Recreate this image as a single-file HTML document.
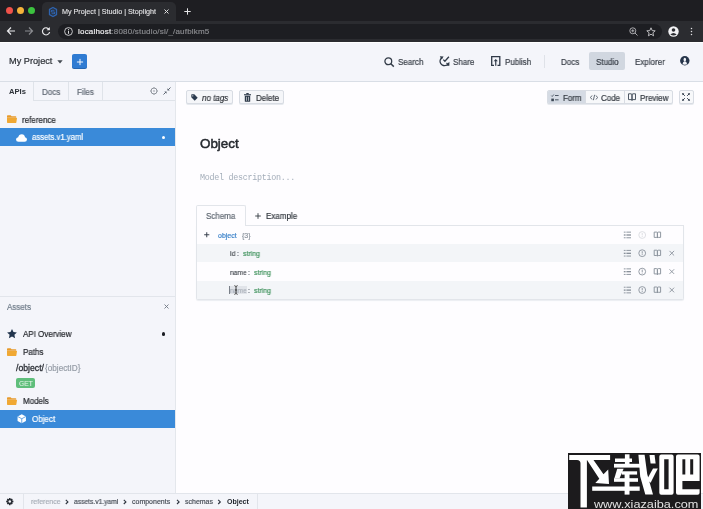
<!DOCTYPE html>
<html><head><meta charset="utf-8">
<style>
*{box-sizing:border-box;margin:0;padding:0}
html,body{width:703px;height:509px;overflow:hidden;font-family:"Liberation Sans",sans-serif;background:#f4f5f9;position:relative}
.a{position:absolute}
.t{position:absolute;white-space:nowrap;line-height:1;will-change:transform;-webkit-text-stroke:0.18px currentColor}
.b{font-weight:700;-webkit-text-stroke:0}
svg{position:absolute;overflow:visible}
</style></head><body>
<!-- browser chrome -->
<div class="a" style="left:0;top:0;width:703px;height:22px;background:#1e1e22"></div>
<div class="a" style="left:42px;top:2px;width:134px;height:21px;background:#2b2c30;border-radius:5px 5px 0 0"></div>
<div class="a" style="left:0;top:21px;width:703px;height:21px;background:#2b2c30"></div>
<div class="a" style="left:58px;top:23.5px;width:604px;height:15.5px;background:#1d1e22;border-radius:8px"></div>
<!-- traffic lights -->
<div class="a" style="left:5.5px;top:6.5px;width:7px;height:7px;border-radius:50%;background:#f0524a"></div>
<div class="a" style="left:16.5px;top:6.5px;width:7px;height:7px;border-radius:50%;background:#f5b33a"></div>
<div class="a" style="left:27.5px;top:6.5px;width:7px;height:7px;border-radius:50%;background:#3cc23f"></div>
<!-- favicon -->
<svg style="left:49px;top:7px" width="8" height="10" viewBox="0 0 8 10"><path d="M4 0.5 L7.5 2.5 V7.5 L4 9.5 L0.5 7.5 V2.5 Z" fill="none" stroke="#2e64b0" stroke-width="1.3"/><path d="M5.5 3.2 H3 Q2.2 3.2 2.2 4.2 Q2.2 5 3 5 H5 Q5.8 5 5.8 5.8 Q5.8 6.8 5 6.8 H2.5" fill="none" stroke="#2e64b0" stroke-width="1.1"/></svg>
<div class="t" style="left:62px;top:8px;font-size:7.2px;color:#e6e6e8;-webkit-text-stroke:0.1px #e6e6e8">My Project | Studio | Stoplight</div>
<svg style="left:164px;top:9px" width="5" height="5" viewBox="0 0 5 5"><path d="M0.5 0.5 L4.5 4.5 M4.5 0.5 L0.5 4.5" stroke="#e0e0e2" stroke-width="1"/></svg>
<svg style="left:184px;top:8px" width="7" height="7" viewBox="0 0 7 7"><path d="M3.5 0.3 V6.7 M0.3 3.5 H6.7" stroke="#e6e6e8" stroke-width="1"/></svg>
<!-- nav -->
<svg style="left:6px;top:26px" width="10" height="10" viewBox="0 0 10 10"><path d="M9 5 H1.5 M5 1.5 L1.5 5 L5 8.5" fill="none" stroke="#e8e8ea" stroke-width="1.2"/></svg>
<svg style="left:24px;top:26px" width="10" height="10" viewBox="0 0 10 10"><path d="M1 5 H8.5 M5 1.5 L8.5 5 L5 8.5" fill="none" stroke="#8a8b8f" stroke-width="1.2"/></svg>
<svg style="left:41px;top:26px" width="10" height="10" viewBox="0 0 10 10"><path d="M8.2 3.6 A3.6 3.6 0 1 0 8.6 6" fill="none" stroke="#e8e8ea" stroke-width="1.2"/><path d="M8.8 1 V4.2 H5.6 Z" fill="#e8e8ea"/></svg>
<svg style="left:63.5px;top:26.5px" width="9" height="9" viewBox="0 0 9 9"><circle cx="4.5" cy="4.5" r="3.9" fill="none" stroke="#d8d8da" stroke-width="0.9"/><rect x="4" y="3.8" width="1" height="3" fill="#d8d8da"/><rect x="4" y="2.1" width="1" height="1" fill="#d8d8da"/></svg>
<div class="t" style="left:77.5px;top:27.6px;font-size:8px;letter-spacing:0.2px;color:#8a8b8f"><span style="color:#f0f0f2">localhost</span>:8080/studio/sl/_/aufblkm5</div>
<svg style="left:629px;top:27px" width="9" height="9" viewBox="0 0 9 9"><circle cx="3.8" cy="3.8" r="3" fill="none" stroke="#b8b8bb" stroke-width="0.9"/><path d="M6 6 L8.5 8.5 M2.3 3.8 H5.3 M3.8 2.3 V5.3" stroke="#b8b8bb" stroke-width="0.9"/></svg>
<svg style="left:646px;top:26.5px" width="10" height="10" viewBox="0 0 10 10"><path d="M5 0.8 L6.2 3.6 L9.2 3.8 L6.9 5.8 L7.6 8.8 L5 7.2 L2.4 8.8 L3.1 5.8 L0.8 3.8 L3.8 3.6 Z" fill="none" stroke="#c8c8cb" stroke-width="0.9"/></svg>
<svg style="left:668px;top:25.5px" width="11" height="11" viewBox="0 0 11 11"><circle cx="5.5" cy="5.5" r="5.2" fill="#f2f2f4"/><circle cx="5.5" cy="4" r="1.8" fill="#2b2c30"/><path d="M2.3 8.6 Q5.5 5.6 8.7 8.6 Q5.5 10.6 2.3 8.6Z" fill="#2b2c30"/></svg>
<svg style="left:690px;top:27px" width="3" height="10" viewBox="0 0 3 10"><circle cx="1.5" cy="1.6" r="0.75" fill="#e0e0e2"/><circle cx="1.5" cy="4.5" r="0.75" fill="#e0e0e2"/><circle cx="1.5" cy="7.4" r="0.75" fill="#e0e0e2"/></svg>


<!-- app header -->
<div class="a" style="left:0;top:42px;width:703px;height:40px;background:#f4f5fa;border-top:1px solid #ffffff;border-bottom:1px solid #d9dee6"></div>
<div class="t" style="left:8.8px;top:57px;font-size:9.2px;color:#2a2e34;-webkit-text-stroke:0.2px #2a2e34">My Project</div>
<svg style="left:57px;top:60px" width="6" height="4" viewBox="0 0 6 4"><path d="M0.3 0.3 H5.7 L3 3.5Z" fill="#444a52"/></svg>
<div class="a" style="left:72.3px;top:54.3px;width:14.5px;height:14.2px;background:#2f7bd2;border-radius:2px;box-shadow:0 1px 0 #2566b0"></div>
<svg style="left:75.5px;top:57.5px" width="8" height="8" viewBox="0 0 8 8"><path d="M4 0.9 V7.1 M0.9 4 H7.1" stroke="#fff" stroke-width="0.95"/></svg>

<svg style="left:383.5px;top:56.5px" width="11" height="10" viewBox="0 0 11 10"><circle cx="4.3" cy="4.3" r="3.4" fill="none" stroke="#333c48" stroke-width="1.3"/><path d="M6.8 6.8 L9.8 9.6" stroke="#333c48" stroke-width="1.5"/></svg>
<div class="t" style="left:397.9px;top:57.9px;font-size:8.4px;transform:scaleX(.955);transform-origin:0 0;color:#353b44">Search</div>
<svg style="left:439px;top:56.3px" width="11" height="10" viewBox="0 0 11 10"><path d="M3.2 1.6 A4.3 4.3 0 0 0 7.6 9" fill="none" stroke="#2f3947" stroke-width="1.4"/><path d="M0.8 0.2 L4.6 0.6 L2.6 3.6Z" fill="#2f3947"/><path d="M4.3 3.6 L5.9 5.2 L9.9 0.8" fill="none" stroke="#2f3947" stroke-width="1.3"/><path d="M6.4 9.8 L10.4 9.8 L10.4 5.8Z" fill="#2f3947"/><path d="M9.5 9 L7.5 7" stroke="#2f3947" stroke-width="1.1"/></svg>
<div class="t" style="left:453.4px;top:57.9px;font-size:8.4px;transform:scaleX(.955);transform-origin:0 0;color:#353b44">Share</div>
<svg style="left:491px;top:56.3px" width="9.5" height="10" viewBox="0 0 9.5 10"><path d="M3 9.3 H0.7 V0.7 H8.8 V9.3 H6.5" fill="none" stroke="#2f3947" stroke-width="1.3"/><path d="M4.75 9.8 V4.5" stroke="#2f3947" stroke-width="1.2"/><path d="M2.6 5.3 L4.75 3 L6.9 5.3Z" fill="#2f3947"/></svg>
<div class="t" style="left:504.9px;top:57.9px;font-size:8.4px;transform:scaleX(.955);transform-origin:0 0;color:#353b44">Publish</div>
<div class="a" style="left:543.5px;top:55px;width:1px;height:13px;background:#dfe2e8"></div>
<div class="t" style="left:560.8px;top:57.9px;font-size:8.4px;transform:scaleX(.955);transform-origin:0 0;color:#353b44">Docs</div>
<div class="a" style="left:589.4px;top:52.3px;width:35.5px;height:18.2px;background:#d1d7e0;border-radius:2px"></div>
<div class="t" style="left:595.9px;top:57.9px;font-size:8.4px;transform:scaleX(.955);transform-origin:0 0;color:#353b44">Studio</div>
<div class="t" style="left:635.3px;top:57.9px;font-size:8.4px;transform:scaleX(.955);transform-origin:0 0;color:#353b44">Explorer</div>
<svg style="left:679.8px;top:56.3px" width="9.6" height="9.6" viewBox="0 0 10 10"><circle cx="5" cy="5" r="4.9" fill="#26354a"/><ellipse cx="5" cy="3.7" rx="1.3" ry="2" fill="#f4f5fa"/><path d="M2.6 8.6 Q3 5.6 5 5.6 Q7 5.6 7.4 8.6 Q5 9.6 2.6 8.6Z" fill="#f4f5fa"/></svg>

<!-- sidebar -->
<div class="a" style="left:0;top:82px;width:176px;height:411px;background:#f4f5fa;border-right:1px solid #e4e7ec"></div>
<div class="a" style="left:33px;top:82px;width:1px;height:18px;background:#dfe3e9"></div>
<div class="a" style="left:68px;top:82px;width:1px;height:18px;background:#dfe3e9"></div>
<div class="a" style="left:101.5px;top:82px;width:1px;height:18px;background:#dfe3e9"></div>
<div class="a" style="left:33px;top:100px;width:142px;height:1px;background:#dfe3e9"></div>
<div class="t b" style="left:8.6px;top:88.3px;font-size:7.6px;color:#2d3238">APIs</div>
<div class="t" style="left:41.5px;top:88px;font-size:8.4px;transform:scaleX(.955);transform-origin:0 0;color:#5c6570">Docs</div>
<div class="t" style="left:76.7px;top:88px;font-size:8.4px;transform:scaleX(.955);transform-origin:0 0;color:#5c6570">Files</div>
<svg style="left:149.5px;top:86.5px" width="8" height="8" viewBox="0 0 8 8"><circle cx="4" cy="4" r="3" fill="none" stroke="#8d939b" stroke-width="1"/><circle cx="4" cy="4" r="0.8" fill="#8d939b"/><path d="M4 0 V1.2 M4 6.8 V8 M0 4 H1.2 M6.8 4 H8" stroke="#8d939b" stroke-width="0.8"/></svg>
<svg style="left:162.5px;top:87px" width="8" height="8" viewBox="0 0 8 8"><path d="M0.5 7.5 L3 5 M7.5 0.5 L5 3" stroke="#5b6470" stroke-width="1"/><path d="M1.3 4.4 H3.6 V6.7Z M6.7 3.6 H4.4 V1.3Z" fill="#5b6470"/></svg>

<!-- reference folder -->
<svg style="left:7px;top:115px" width="10" height="8.3" viewBox="0 0 10 8"><path d="M0 0.8 Q0 0 0.8 0 H3.6 L4.6 1 H8.6 Q9.3 1 9.3 1.8 V2.5 H0Z" fill="#e79b2c"/><path d="M0 2.8 H10 L9.3 7.3 Q9.2 7.8 8.6 7.8 H0.7 Q0 7.8 0 7.2Z" fill="#f0a833"/></svg>
<div class="t" style="left:22.4px;top:115.5px;font-size:8.4px;transform:scaleX(.955);transform-origin:0 0;color:#202328">reference</div>
<div class="a" style="left:0;top:128px;width:175px;height:18px;background:#3a8ad9"></div>
<svg style="left:16px;top:133.5px" width="11" height="8" viewBox="0 0 11 8"><path d="M2.5 7.8 Q0 7.8 0 5.5 Q0 3.5 2.2 3.3 Q2.8 0.2 5.8 0.2 Q8.6 0.3 9 3.3 Q11 3.6 11 5.6 Q10.9 7.8 8.6 7.8Z" fill="#fff"/></svg>
<div class="t" style="left:31.8px;top:133.4px;font-size:8.5px;transform:scaleX(.91);transform-origin:0 0;color:#fff">assets.v1.yaml</div>
<div class="a" style="left:161.5px;top:135.5px;width:3px;height:3px;border-radius:50%;background:#fff"></div>

<!-- assets panel -->
<div class="a" style="left:0;top:295.5px;width:175px;height:1px;background:#e2e5eb"></div>
<div class="t" style="left:6.8px;top:302.5px;font-size:8.4px;transform:scaleX(.955);transform-origin:0 0;color:#6b7886">Assets</div>
<svg style="left:164px;top:303.5px" width="5" height="5" viewBox="0 0 5 5"><path d="M0.5 0.5 L4.5 4.5 M4.5 0.5 L0.5 4.5" stroke="#6f7782" stroke-width="0.9"/></svg>
<svg style="left:6.6px;top:328.8px" width="10" height="9.5" viewBox="0 0 10 9.5"><path d="M5 0 L6.5 3.1 L9.9 3.5 L7.4 5.8 L8.1 9.3 L5 7.6 L1.9 9.3 L2.6 5.8 L0.1 3.5 L3.5 3.1Z" fill="#22354d"/></svg>
<div class="t" style="left:22.7px;top:329.5px;font-size:8.4px;transform:scaleX(.955);transform-origin:0 0;color:#202328">API Overview</div>
<div class="a" style="left:161.5px;top:332px;width:3.6px;height:3.6px;border-radius:50%;background:#1a1d22"></div>
<svg style="left:7px;top:347.6px" width="10" height="8.3" viewBox="0 0 10 8"><path d="M0 0.8 Q0 0 0.8 0 H3.6 L4.6 1 H8.6 Q9.3 1 9.3 1.8 V2.5 H0Z" fill="#e79b2c"/><path d="M0 2.8 H10 L9.3 7.3 Q9.2 7.8 8.6 7.8 H0.7 Q0 7.8 0 7.2Z" fill="#f0a833"/></svg>
<div class="t" style="left:22.7px;top:348px;font-size:8.4px;transform:scaleX(.955);transform-origin:0 0;color:#202328">Paths</div>
<div class="t" style="left:16px;top:364.4px;font-size:8.7px;color:#2b2f35;-webkit-text-stroke:0.3px #2b2f35">/object/</div><div class="t" style="left:44.5px;top:364.7px;font-size:8.2px;color:#959ca6">{objectID}</div>
<div class="a" style="left:16.2px;top:377.5px;width:18.5px;height:10px;background:#5fbe7b;border-radius:2px"></div>
<div class="t" style="left:18.8px;top:379.6px;font-size:7.3px;transform:scaleX(.92);transform-origin:0 0;color:#e8f6ec;-webkit-text-stroke:0.05px #e8f6ec">GET</div>
<svg style="left:7px;top:396.6px" width="10" height="8.3" viewBox="0 0 10 8"><path d="M0 0.8 Q0 0 0.8 0 H3.6 L4.6 1 H8.6 Q9.3 1 9.3 1.8 V2.5 H0Z" fill="#e79b2c"/><path d="M0 2.8 H10 L9.3 7.3 Q9.2 7.8 8.6 7.8 H0.7 Q0 7.8 0 7.2Z" fill="#f0a833"/></svg>
<div class="t" style="left:22.8px;top:396.5px;font-size:8.4px;transform:scaleX(.955);transform-origin:0 0;color:#202328">Models</div>
<div class="a" style="left:0;top:410px;width:175px;height:17.5px;background:#3a8ad9"></div>
<svg style="left:17px;top:414px" width="9.5" height="9.5" viewBox="0 0 10 10"><path d="M5 0.3 L9.4 2.6 V7.4 L5 9.7 L0.6 7.4 V2.6Z" fill="#fff"/><path d="M0.8 2.7 L5 5 L9.2 2.7 M5 5 V9.6" fill="none" stroke="#3a8ad9" stroke-width="0.8"/></svg>
<div class="t" style="left:31.8px;top:414.5px;font-size:8.4px;transform:scaleX(.955);transform-origin:0 0;color:#fff">Object</div>

<!-- main -->
<div class="a" style="left:176px;top:82px;width:527px;height:411px;background:#fefdff"></div>
<div class="a" style="left:186px;top:90px;width:46.5px;height:14.4px;background:#f5f6f9;border:1px solid #d8dce3;border-radius:2px;box-shadow:0 1px 0 #e6e9ee"></div>
<svg style="left:190.6px;top:93.5px" width="7" height="7" viewBox="0 0 7 7"><path d="M0.3 0.8 Q0.3 0.3 0.8 0.3 H3.3 L6.7 3.7 L3.7 6.7 L0.3 3.3Z" fill="#2a3a4e"/><circle cx="1.8" cy="1.8" r="0.6" fill="#f5f6f9"/></svg>
<div class="t" style="left:201.9px;top:93.5px;font-size:8.4px;transform:scaleX(.955);transform-origin:0 0;font-style:italic;color:#2b2f35">no tags</div>
<div class="a" style="left:239px;top:90px;width:44.6px;height:14.4px;background:#f5f6f9;border:1px solid #d8dce3;border-radius:2px;box-shadow:0 1px 0 #e6e9ee"></div>
<svg style="left:244px;top:92.5px" width="7" height="9" viewBox="0 0 7 9"><rect x="0" y="1.2" width="7" height="1.1" fill="#2f3b4a"/><rect x="2.3" y="0" width="2.4" height="1.2" fill="#2f3b4a"/><path d="M0.8 2.8 H6.2 V8.2 Q6.2 8.8 5.6 8.8 H1.4 Q0.8 8.8 0.8 8.2Z" fill="#2f3b4a"/><path d="M2.5 3.8 V7.8 M4.5 3.8 V7.8" stroke="#f5f6f9" stroke-width="0.6"/></svg>
<div class="t" style="left:255.9px;top:93.5px;font-size:8.4px;transform:scaleX(.955);transform-origin:0 0;color:#2b2f35">Delete</div>

<!-- view group -->
<div class="a" style="left:547px;top:90px;width:126px;height:14.4px;background:#f7f8fa;border:1px solid #d8dce3;border-radius:2px;box-shadow:0 1px 0 #e6e9ee"></div>
<div class="a" style="left:548px;top:91px;width:37px;height:12.4px;background:#d5dbe4;border-radius:1px 0 0 1px"></div>
<div class="a" style="left:585px;top:91px;width:1px;height:12.4px;background:#d8dce3"></div>
<div class="a" style="left:624px;top:91px;width:1px;height:12.4px;background:#d8dce3"></div>
<svg style="left:551px;top:93.5px" width="8" height="8" viewBox="0 0 8 8"><path d="M0.3 1.6 L1.2 2.5 L2.8 0.5" fill="none" stroke="#3b4654" stroke-width="0.8"/><rect x="4" y="1.1" width="3.6" height="0.9" fill="#3b4654"/><rect x="0.3" y="4.6" width="2.6" height="2.6" fill="#3b4654"/><rect x="4" y="5.4" width="3.6" height="0.9" fill="#3b4654"/></svg>
<div class="t" style="left:562.8px;top:93.5px;font-size:8.4px;transform:scaleX(.955);transform-origin:0 0;color:#2f353c">Form</div>
<svg style="left:589.7px;top:93.5px" width="8" height="7" viewBox="0 0 8 7"><path d="M2 1.5 L0.5 3.5 L2 5.5 M6 1.5 L7.5 3.5 L6 5.5 M4.6 0.8 L3.4 6.2" fill="none" stroke="#3b4654" stroke-width="0.8"/></svg>
<div class="t" style="left:601.4px;top:93.5px;font-size:8.4px;transform:scaleX(.955);transform-origin:0 0;color:#2f353c">Code</div>
<svg style="left:628.4px;top:93px" width="8" height="8" viewBox="0 0 8 8"><path d="M0.5 0.8 H3 Q4 0.8 4 1.8 V7.3 Q4 6.6 3 6.6 H0.5Z M7.5 0.8 H5 Q4 0.8 4 1.8 V7.3 Q4 6.6 5 6.6 H7.5Z" fill="none" stroke="#3b4654" stroke-width="0.9"/></svg>
<div class="t" style="left:640.1px;top:93.5px;font-size:8.4px;transform:scaleX(.955);transform-origin:0 0;color:#2f353c">Preview</div>
<div class="a" style="left:679px;top:90px;width:14.5px;height:14.4px;background:#f7f8fa;border:1px solid #d8dce3;border-radius:2px;box-shadow:0 1px 0 #e6e9ee"></div>
<svg style="left:682.4px;top:93.4px" width="8" height="8" viewBox="0 0 8 8"><path d="M0.5 0.5 L2.8 2.8 M7.5 0.5 L5.2 2.8 M0.5 7.5 L2.8 5.2 M7.5 7.5 L5.2 5.2" stroke="#2f3b4a" stroke-width="1"/><path d="M0.3 0.3 H2.3 L0.3 2.3Z M7.7 0.3 H5.7 L7.7 2.3Z M0.3 7.7 H2.3 L0.3 5.7Z M7.7 7.7 H5.7 L7.7 5.7Z" fill="#2f3b4a"/></svg>

<div class="t" style="left:200.2px;top:137.2px;font-size:13.4px;color:#25292f;-webkit-text-stroke:0.5px #25292f">Object</div>
<div class="t" style="left:200.2px;top:173.9px;font-family:'Liberation Mono',monospace;font-size:8.4px;letter-spacing:-0.27px;color:#a3adb9;-webkit-text-stroke:0">Model description...</div>

<!-- schema tabs -->
<div class="a" style="left:196px;top:205px;width:49.5px;height:21px;background:#fefdff;border:1px solid #e2e5ea;border-bottom:none;border-radius:2px 2px 0 0"></div>
<div class="t" style="left:206.2px;top:211.5px;font-size:8.4px;transform:scaleX(.955);transform-origin:0 0;color:#5d6670">Schema</div>
<svg style="left:254.5px;top:213px" width="6" height="6" viewBox="0 0 6 6"><path d="M3 0.2 V5.8 M0.2 3 H5.8" stroke="#333a42" stroke-width="0.9"/></svg>
<div class="t" style="left:266px;top:211.5px;font-size:8.4px;transform:scaleX(.955);transform-origin:0 0;color:#2f353c">Example</div>

<!-- table -->
<div class="a" style="left:196px;top:225px;width:488px;height:74.6px;border:1px solid #e2e5ea;border-top:none;border-radius:0 0 2px 2px;box-shadow:0 1px 1px #eceef2"></div>
<div class="a" style="left:245px;top:225px;width:439px;height:1px;background:#e2e5ea"></div>
<div class="a" style="left:197px;top:244px;width:486px;height:18px;background:#f3f5f8"></div>
<div class="a" style="left:197px;top:281.3px;width:486px;height:17.3px;background:#f3f5f8"></div>
<svg style="left:204.3px;top:232.3px" width="5.5" height="5.5" viewBox="0 0 6 6"><path d="M3 0.2 V5.8 M0.2 3 H5.8" stroke="#3b4350" stroke-width="1.1"/></svg>
<div class="t" style="left:217.7px;top:231.5px;font-size:7px;color:#3b82c9">object</div>
<div class="t" style="left:241.6px;top:231.5px;font-size:7px;color:#8a929c">{3}</div>
<div class="t" style="left:229.9px;top:250px;font-size:7.4px;transform:scaleX(.92);transform-origin:0 0;color:#30363d;-webkit-text-stroke:0.1px #30363d">id</div><div class="t" style="left:236.6px;top:250px;font-size:7px;color:#3b4350">:</div>
<div class="t" style="left:242.7px;top:250px;font-size:7.3px;transform:scaleX(.95);transform-origin:0 0;color:#3a8f58">string</div>
<div class="t" style="left:229.9px;top:268.5px;font-size:7.4px;transform:scaleX(.9);transform-origin:0 0;color:#30363d;-webkit-text-stroke:0.1px #30363d">name</div><div class="t" style="left:248.3px;top:268.5px;font-size:7px;color:#3b4350">:</div>
<div class="t" style="left:254.3px;top:268.5px;font-size:7.3px;transform:scaleX(.95);transform-origin:0 0;color:#3a8f58">string</div>
<div class="a" style="left:229.5px;top:286px;width:17.5px;height:7.5px;background:#e1e4e9"></div>
<div class="t" style="left:229.9px;top:287px;font-size:7.4px;transform:scaleX(.9);transform-origin:0 0;color:#a3aab3;-webkit-text-stroke:0.1px #a3aab3">name</div><div class="t" style="left:248.3px;top:287px;font-size:7px;color:#3b4350">:</div>
<div class="a" style="left:229px;top:285.5px;width:1px;height:8.5px;background:#7a8089"></div>
<svg style="left:234px;top:285px" width="4" height="10" viewBox="0 0 4 10"><path d="M0.3 0.5 L2 1.5 L3.7 0.5 M0.3 9.5 L2 8.5 L3.7 9.5" fill="none" stroke="#3a3a3a" stroke-width="0.8"/><path d="M2 1.3 V8.7 M1.2 5 H2.8" stroke="#2a2a2a" stroke-width="0.9"/></svg>
<div class="t" style="left:254.3px;top:287px;font-size:7.3px;transform:scaleX(.95);transform-origin:0 0;color:#3a8f58">string</div>

<!-- row icons -->
<svg id="ic" style="left:0;top:0" width="703" height="509" viewBox="0 0 703 509">
<defs>
<g id="lst"><rect x="0" y="0.2" width="1.8" height="1.1" fill="#9aa1aa"/><rect x="2.6" y="0.2" width="4.6" height="1.1" fill="#9aa1aa"/><rect x="0" y="3" width="1.8" height="1.2" fill="#7d858f"/><rect x="2.6" y="3" width="4.6" height="1.2" fill="#7d858f"/><rect x="0" y="5.8" width="1.8" height="1.1" fill="#9aa1aa"/><rect x="2.6" y="5.8" width="4.6" height="1.1" fill="#9aa1aa"/></g>
<g id="inf"><circle cx="0" cy="0" r="3.4" fill="none" stroke="#8a929c" stroke-width="0.9"/><rect x="-0.45" y="-2" width="0.9" height="2.4" fill="#8a929c"/><rect x="-0.45" y="1" width="0.9" height="0.9" fill="#8a929c"/></g>
<g id="bk"><path d="M0.5 0.5 H2.8 Q3.7 0.5 3.7 1.3 V6.4 Q3.7 5.8 2.8 5.8 H0.5Z M6.9 0.5 H4.6 Q3.7 0.5 3.7 1.3 V6.4 Q3.7 5.8 4.6 5.8 H6.9Z" fill="none" stroke="#8a929c" stroke-width="0.95"/></g>
<g id="xx"><path d="M0 0 L4.6 4.6 M4.6 0 L0 4.6" stroke="#8a929c" stroke-width="0.9"/></g>
</defs>
<use href="#lst" x="623.8" y="231.4"/><use href="#inf" x="642.2" y="235" opacity="0.3"/><use href="#bk" x="653.7" y="231.6"/>
<use href="#lst" x="623.8" y="249.7"/><use href="#inf" x="642.2" y="253.2"/><use href="#bk" x="653.7" y="249.7"/><use href="#xx" x="669.5" y="250.9"/>
<use href="#lst" x="623.8" y="268.1"/><use href="#inf" x="642.2" y="271.6"/><use href="#bk" x="653.7" y="268.1"/><use href="#xx" x="669.5" y="269.3"/>
<use href="#lst" x="623.8" y="286.5"/><use href="#inf" x="642.2" y="290"/><use href="#bk" x="653.7" y="286.5"/><use href="#xx" x="669.5" y="287.7"/>
</svg>

<!-- status bar -->
<div class="a" style="left:0;top:493px;width:703px;height:16px;background:#f4f5fa;border-top:1px solid #e2e5eb"></div>
<div class="a" style="left:22.5px;top:494px;width:1px;height:15px;background:#e2e5eb"></div>
<div class="a" style="left:257px;top:494px;width:1px;height:15px;background:#e2e5eb"></div>
<svg style="left:6.4px;top:498.2px" width="7.6" height="7.6" viewBox="0 0 8 8"><path d="M3.3 0 H4.7 L5 1.2 L6.1 0.6 L7.1 1.6 L6.5 2.7 L7.8 3 V4.4 L6.5 4.8 L7.1 5.9 L6.1 6.9 L5 6.3 L4.7 7.6 H3.3 L3 6.3 L1.9 6.9 L0.9 5.9 L1.5 4.8 L0.2 4.4 V3 L1.5 2.7 L0.9 1.6 L1.9 0.6 L3 1.2Z" fill="#262b32"/><circle cx="4" cy="3.8" r="1.3" fill="#f4f5fa"/></svg>
<div class="t" style="left:30.5px;top:498px;font-size:7px;color:#a8afb8">reference</div>
<div class="t" style="left:74px;top:498px;font-size:7px;transform:scaleX(.955);transform-origin:0 0;color:#474e57">assets.v1.yaml</div>
<div class="t" style="left:132.3px;top:498px;font-size:7px;color:#474e57">components</div>
<div class="t" style="left:184.7px;top:498px;font-size:7px;color:#474e57">schemas</div>
<div class="t b" style="left:226.6px;top:498px;font-size:7px;color:#22272e">Object</div>
<svg style="left:0;top:0" width="703" height="509"><g fill="none" stroke="#2f3640" stroke-width="1.15"><path d="M65.8 499.8 L67.9 501.9 L65.8 504"/><path d="M123.8 499.8 L125.9 501.9 L123.8 504"/><path d="M177 499.8 L179.1 501.9 L177 504"/><path d="M218.2 499.8 L220.3 501.9 L218.2 504"/></g></svg>

<!-- watermark -->
<svg style="left:0;top:0" width="703" height="509" viewBox="0 0 703 509">
<rect x="568" y="453" width="133" height="56" fill="#1c1b1d"/>
<g fill="#fff">
<path d="M569.2 455 H610.1 V460 H586.9 V507.5 H580.5 V463.5 Q580.5 460 577 460 H569.2Z"/>
<path d="M587 460 L593.5 460 L603.5 474.3 L608.2 469.6 L609 484 L595.3 483 L599.3 478.8Z"/>
<rect x="592.2" y="486.5" width="47.5" height="4.3"/>
<rect x="624.9" y="454.3" width="4.6" height="11.5"/>
<rect x="615" y="458.5" width="17" height="3.5"/>
<rect x="614" y="463.8" width="26" height="3.8"/>
<path d="M617.2 468.8 L623.6 468.8 L619.6 478.3 L614.4 478.3Z"/>
<rect x="621.8" y="471.3" width="15.3" height="3.3"/>
<rect x="614" y="478.2" width="24" height="3.6"/>
<rect x="624.6" y="472.6" width="4.9" height="22"/>
<path d="M638.4 454.7 L644.6 454.7 L647.2 474 L653 494.5 L645.3 494.5 L640.2 476.5Z"/>
<path d="M649.5 455 L654.6 455 L655.6 463.6 L650.6 463.6Z"/>
<path d="M653 468.5 L657.8 468.5 L650.6 482.8 L646.8 479.8Z"/>
<path d="M661.3 454.4 H671.6 Q673.6 454.4 673.6 456.4 V492.7 Q673.6 494.7 671.6 494.7 H661.3 Q659.3 494.7 659.3 492.7 V456.4 Q659.3 454.4 661.3 454.4Z M664.2 459.3 V489.3 H668.6 V459.3Z" fill-rule="evenodd"/>
<path d="M678 454.4 H697.6 Q699.6 454.4 699.6 456.4 V480.9 H682.4 V489.3 H699.6 V492.7 Q699.6 494.7 697.6 494.7 H678 Q676 494.7 676 492.7 V456.4 Q676 454.4 678 454.4Z M682.4 459.3 V474.5 H685.3 V459.3Z M690.2 459.3 V474.5 H693.2 V459.3Z" fill-rule="evenodd"/>
</g>
<text x="593.9" y="507.8" font-family="Liberation Sans" font-size="10.7" fill="#e2e2e2" textLength="104.5" lengthAdjust="spacingAndGlyphs">www.xiazaiba.com</text>
</svg>
</body></html>
